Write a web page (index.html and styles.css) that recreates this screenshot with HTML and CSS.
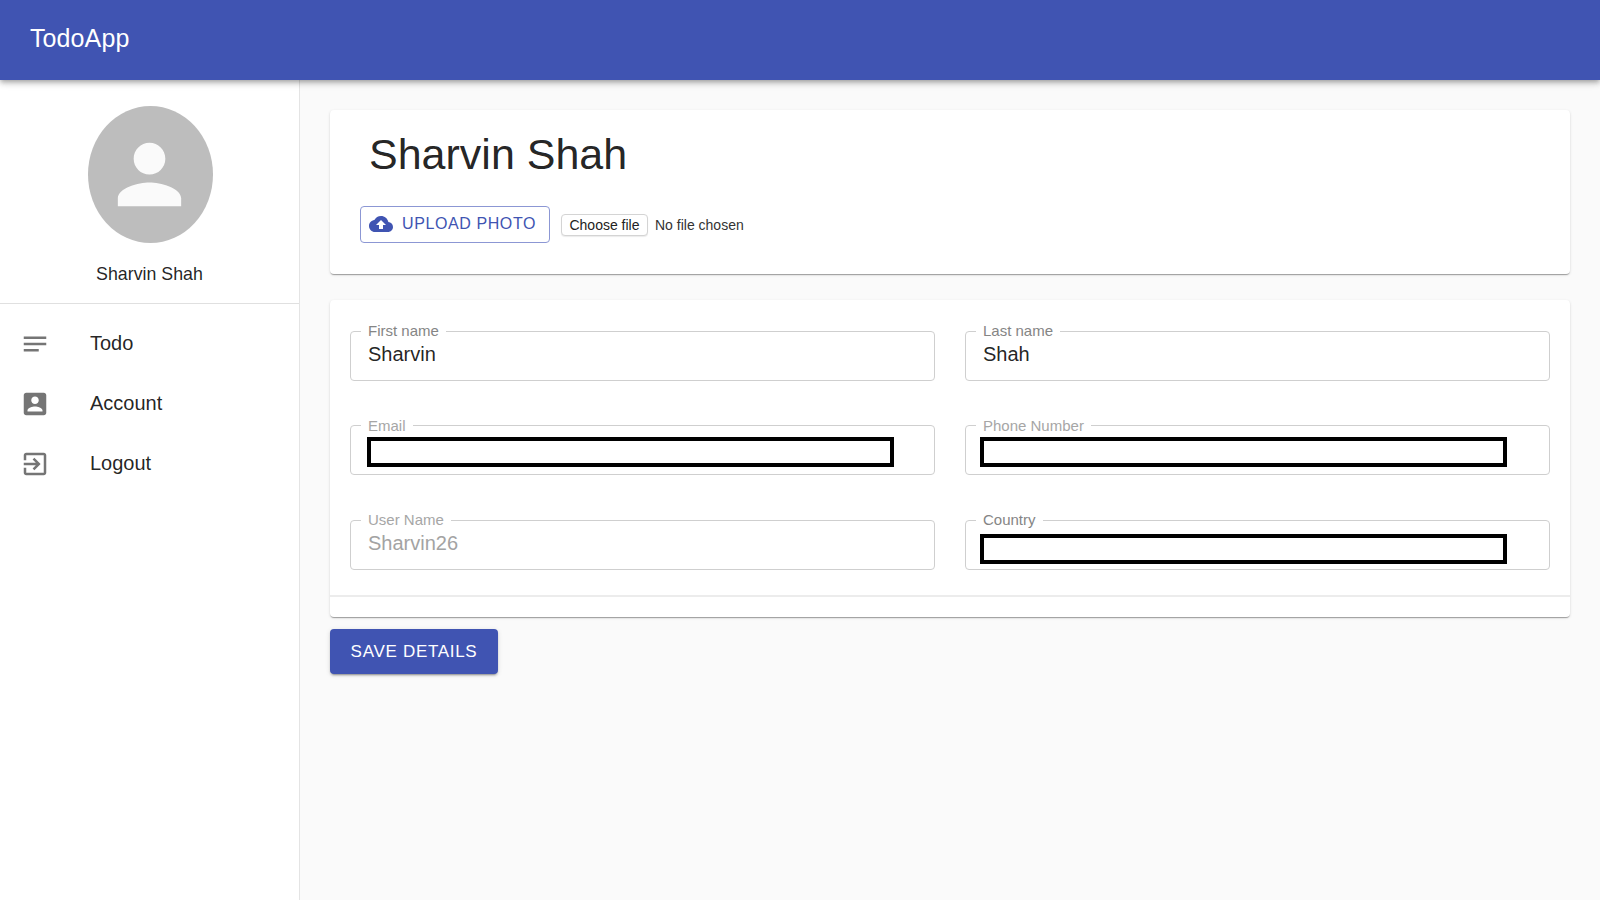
FILE: index.html
```html
<!DOCTYPE html>
<html lang="en">
<head>
<meta charset="utf-8">
<title>TodoApp</title>
<link rel="stylesheet" href="styles.css">
</head>
<body>
<header class="appbar"><span class="brand">TodoApp</span></header>
<div class="shell">
  <aside class="sidebar">
    <div class="profile">
      <div class="avatar">
        <svg class="avatar-icon" viewBox="0 0 24 24"><path d="M12 12c2.21 0 4-1.79 4-4s-1.79-4-4-4-4 1.79-4 4 1.79 4 4 4zm0 2c-2.67 0-8 1.34-8 4v2h16v-2c0-2.66-5.33-4-8-4z"/></svg>
      </div>
      <p class="profile-name">Sharvin Shah</p>
    </div>
    <nav class="nav">
      <a class="nav-item"><svg class="nav-icon" viewBox="0 0 24 24"><path d="M3 6h18v2H3zM3 11h18v2H3zM3 16h12v2H3z"/></svg><span>Todo</span></a>
      <a class="nav-item"><svg class="nav-icon" viewBox="0 0 24 24"><path d="M3 5v14c0 1.1.89 2 2 2h14c1.1 0 2-.9 2-2V5c0-1.1-.9-2-2-2H5c-1.11 0-2 .9-2 2zm12 4c0 1.66-1.34 3-3 3s-3-1.34-3-3 1.34-3 3-3 3 1.34 3 3zm-9 8c0-2 4-3.1 6-3.1s6 1.1 6 3.1v1H6v-1z"/></svg><span>Account</span></a>
      <a class="nav-item"><svg class="nav-icon" viewBox="0 0 24 24"><path d="M10.09 15.59L11.5 17l5-5-5-5-1.41 1.41L12.67 11H3v2h9.67l-2.58 2.59zM19 3H5c-1.11 0-2 .9-2 2v4h2V5h14v14H5v-4H3v4c0 1.1.89 2 2 2h14c1.1 0 2-.9 2-2V5c0-1.1-.9-2-2-2z"/></svg><span>Logout</span></a>
    </nav>
  </aside>
  <main class="main">
    <section class="card card-head">
      <h1 class="title">Sharvin Shah</h1>
      <div class="upload-row">
        <button class="btn-outline" type="button">
          <svg class="cloud" viewBox="0 0 24 24"><path d="M19.35 10.04C18.67 6.59 15.64 4 12 4 9.11 4 6.6 5.64 5.35 8.04 2.34 8.36 0 10.91 0 14c0 3.31 2.69 6 6 6h13c2.76 0 5-2.24 5-5 0-2.64-2.05-4.78-4.65-4.96zM14 13v4h-4v-4H7l5-5 5 5h-3z"/></svg>
          Upload Photo
        </button>
        <button class="btn-file" type="button">Choose file</button>
        <span class="file-note">No file chosen</span>
      </div>
    </section>
    <section class="card card-form">
      <div class="form-grid">
        <fieldset class="field"><legend>First name</legend><div class="value">Sharvin</div></fieldset>
        <fieldset class="field"><legend>Last name</legend><div class="value">Shah</div></fieldset>
        <fieldset class="field field-muted"><legend>Email</legend><div class="redact redact-left"></div></fieldset>
        <fieldset class="field field-muted"><legend>Phone Number</legend><div class="redact redact-right"></div></fieldset>
        <fieldset class="field field-muted"><legend>User Name</legend><div class="value value-muted">Sharvin26</div></fieldset>
        <fieldset class="field"><legend>Country</legend><div class="redact redact-right redact-low"></div></fieldset>
      </div>
      <div class="card-foot"></div>
    </section>
    <button class="btn-save" type="button">Save Details</button>
  </main>
</div>
</body>
</html>
```
FILE: styles.css
```css
* { box-sizing: border-box; }
html, body { margin: 0; height: 100%; }
body {
  height: 900px;
  overflow: hidden;
  display: flex;
  flex-direction: column;
  background: #fafafa;
  color: rgba(0,0,0,.87);
  font-family: "Liberation Sans", Arial, sans-serif;
}
.appbar {
  position: relative;
  z-index: 2;
  height: 80px;
  flex: none;
  display: flex;
  align-items: center;
  padding-left: 30px;
  background: #4054b2;
  color: #fff;
  box-shadow: 0 2px 4px -1px rgba(0,0,0,.2), 0 4px 5px 0 rgba(0,0,0,.14), 0 1px 10px 0 rgba(0,0,0,.12);
}
.brand { font-size: 25px; letter-spacing: .1px; margin-top: -4px; }
.shell { flex: 1; display: flex; min-height: 0; }

.sidebar {
  width: 300px;
  flex: none;
  background: #fff;
  border-right: 1px solid #e4e4e4;
}
.profile {
  height: 224px;
  padding-top: 26px;
  border-bottom: 1px solid #e0e0e0;
  display: flex;
  flex-direction: column;
  align-items: center;
}
.avatar {
  width: 125px;
  height: 137px;
  margin-left: 1px;
  border-radius: 50%;
  background: #bdbdbd;
  display: flex;
  align-items: center;
  justify-content: center;
}
.avatar-icon { width: 95px; height: 95px; margin-right: 1px; fill: #fafafa; }
.profile-name { margin: 21px 0 0; font-size: 17.8px; line-height: 21px; }
.nav { padding-top: 10px; }
.nav-item {
  height: 60px;
  display: flex;
  align-items: center;
  padding-left: 20px;
  font-size: 20px;
}
.nav-item span { margin-top: -1px; }
.nav-icon { width: 30px; height: 30px; margin-right: 40px; fill: #757575; }

.main { flex: 1; padding: 30px 30px 0; min-width: 0; }
.card {
  background: #fff;
  border-radius: 4px;
  box-shadow: 0 2px 1px -1px rgba(0,0,0,.2), 0 1px 1px 0 rgba(0,0,0,.14), 0 1px 3px 0 rgba(0,0,0,.12);
}
.card-head { height: 164px; padding: 19px 30px 0; }
.title { margin: 0 0 27px 9px; font-size: 43px; line-height: 50px; font-weight: 400; }
.upload-row { display: flex; align-items: center; }
.btn-outline {
  width: 190px;
  height: 37px;
  display: flex;
  align-items: center;
  padding: 0 0 1px 8px;
  background: #fff;
  border: 1px solid #8c97d4;
  border-radius: 4px;
  color: #4054b2;
  font: 400 16px "Liberation Sans", Arial, sans-serif;
  letter-spacing: .6px;
  text-transform: uppercase;
}
.cloud { width: 24px; height: 24px; margin: 0 9px 0 0; fill: #4054b2; }
.btn-file {
  margin-left: 11px;
  width: 87px;
  height: 22px;
  padding: 0;
  background: #fff;
  border: 1px solid #d4d4d4;
  border-radius: 4px;
  box-shadow: 0 1px 1px rgba(0,0,0,.08);
  color: #222;
  font: 400 14px "Liberation Sans", Arial, sans-serif;
}
.file-note { margin-left: 7px; font-size: 14px; color: #333; }

.card-form { margin-top: 26px; height: 317px; display: flex; flex-direction: column; }
.form-grid {
  flex: none;
  height: 297px;
  padding: 23px 20px 0;
  display: grid;
  grid-template-columns: 585px 585px;
  column-gap: 30px;
  grid-auto-rows: 49px;
  row-gap: 45.5px;
  border-bottom: 2px solid #ececec;
}
.field {
  margin: 0;
  height: 57.5px;
  padding: 0 0 0 17px;
  border: 1.5px solid #cfcfcf;
  border-radius: 4px;
  min-width: 0;
}
.field legend {
  margin-left: -7px;
  padding: 0 7px;
  font-size: 15px;
  line-height: 16px;
  color: #858585;
}
.field-muted legend { color: #a6a6a6; }
.value { font-size: 20px; line-height: 24px; margin-top: 3px; }
.value-muted { color: #a3a3a3; }
.redact {
  height: 30px;
  margin-top: 3px;
  background: #fff;
  border: 4px solid #000;
}
.redact-left { width: 527px; margin-left: -1px; }
.redact-right { width: 527px; margin-left: -3px; }
.redact-low { margin-top: 6px; }
.card-foot { flex: 1; }

.btn-save {
  display: block;
  margin-top: 12px;
  width: 168px;
  height: 45px;
  padding: 1px 0 0;
  background: #4054b2;
  border: 0;
  border-radius: 4px;
  color: #fff;
  font: 400 17px "Liberation Sans", Arial, sans-serif;
  letter-spacing: .7px;
  text-transform: uppercase;
  box-shadow: 0 3px 1px -2px rgba(0,0,0,.2), 0 2px 2px 0 rgba(0,0,0,.14), 0 1px 5px 0 rgba(0,0,0,.12);
}
```
